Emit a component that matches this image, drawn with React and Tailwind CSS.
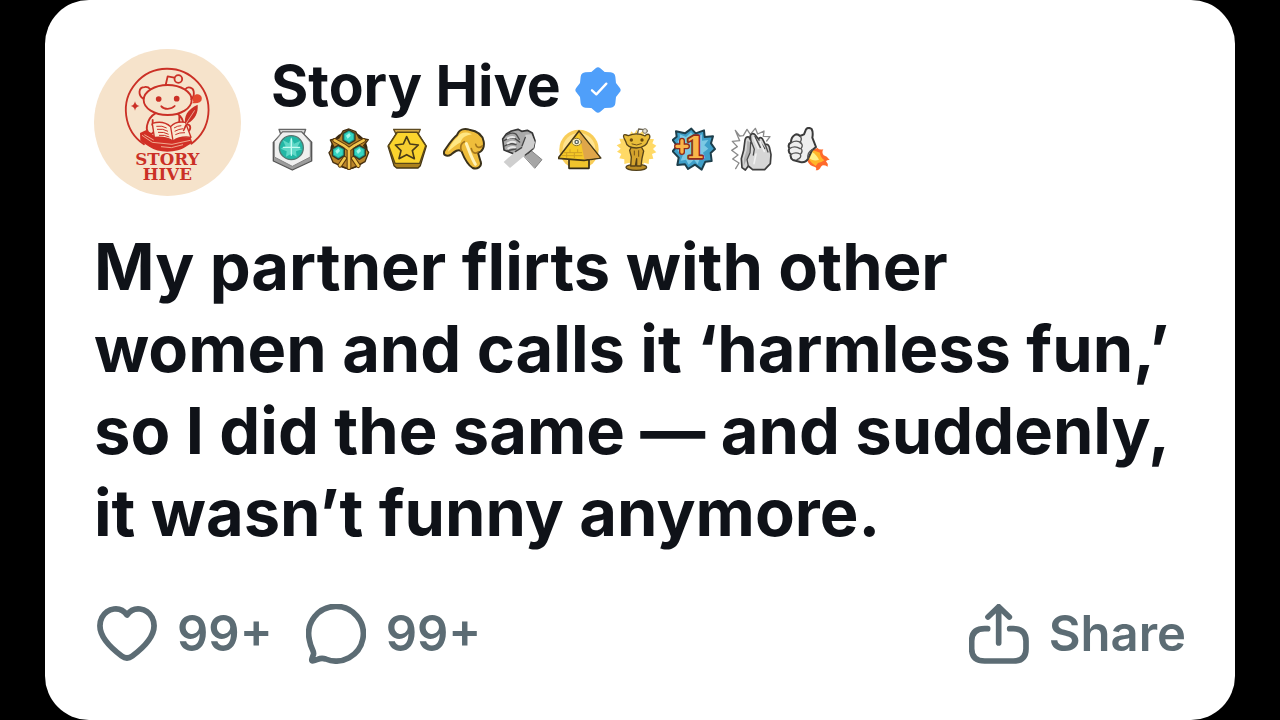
import React from "react";

function Avatar() {
  return (
    <svg
      viewBox="30 27 441 441"
      className="size-[147px] shrink-0"
      role="img"
      aria-label="Story Hive logo"
    >
      <circle cx="250.500" cy="247.500" r="220.500" fill="#f6e3cb" />
      <g
        fill="none"
        stroke="#cb3026"
        strokeWidth="5.500"
        strokeLinecap="round"
        strokeLinejoin="round"
      >
        <path d="M180 313A124 124 0 1 1 322 311" />
        <path d="M245 135L251 109L271 113" />
        <circle cx="283" cy="117" r="11.500" />
        <path d="M178 176C162 166 162 142 182 141C190 140 195 143 198 147" />
        <path d="M305 147C312 138 327 143 329 154C331 165 328 172 322 178" />
        <ellipse cx="251" cy="180" rx="72" ry="45" />
        <path d="M214 220C200 228 192 242 189 257C186 275 194 283 205 280C213 276 211 263 205 254" />
        <path d="M206 254V240" />
        <path d="M282 223C292 230 296 238 298 250M286 226V248" />
        <path d="M309 253C321 253 322 269 312 274" />
        <path d="M232 199C240 209 262 209 272 198" />
      </g>
      <circle cx="224" cy="177" r="8.500" fill="#cb3026" />
      <circle cx="278" cy="176" r="8.500" fill="#cb3026" />
      <path d="M153 184Q155 196 167 198Q155 200 153 212Q151 200 140 198Q151 196 153 184Z" fill="#cb3026" />
      <path d="M324 190L328 185C322 171 331 163 341 163C352 164 356 174 352 182C347 189 336 190 324 190Z" fill="#e4482f" />
      {/* Book */}
      <path d="M168 279L187 270L208 286L320 293L325 308L309 318C280 340 224 340 197 321L169 303Z" fill="#d22f25" />
      <path d="M205 250C228 243 248 249 260 260C271 247 287 244 304 247L321 292C300 289 282 292 267 303C251 292 231 290 211 292Z" fill="#f9e8d2" stroke="#cb3026" strokeWidth="4" strokeLinejoin="round" />
      <path d="M260 261L267 302" stroke="#cb3026" strokeWidth="4" />
      <path d="M217 259Q235 256 248 264M219 268Q237 265 252 274M222 277Q240 275 254 283M225 286Q242 284 256 291M270 264Q281 257 292 257M272 274Q284 267 298 266M274 284Q286 277 303 278" fill="none" stroke="#cb3026" strokeWidth="3" />
      <path d="M174 286L205 307L264 313L319 301M181 284L209 300M231 320L262 323L297 314" fill="none" stroke="#f6c3a6" strokeWidth="2.500" />
      {/* Quill */}
      <path d="M304 253C299 229 310 208 341 194C343 218 334 237 312 250L300 274L296 273Z" fill="#cb3026" />
      <path d="M304 254L332 211" stroke="#f6e3cb" strokeWidth="2" />
      <text
        fill="#cb3026"
        textAnchor="middle"
        fontFamily="'DejaVu Serif', serif"
        fontWeight="700"
        fontSize="50"
      >
        <tspan x="250" y="376">STORY</tspan>
        <tspan x="250" y="421">HIVE</tspan>
      </text>
    </svg>
  );
}

function VerifiedBadge() {
  return (
    <svg
      viewBox="936 50 138 138"
      className="mt-2 size-[46px] shrink-0"
      role="img"
      aria-label="Verified"
    >
      <path
        d="M998 54Q1005 48 1012 54L1025 65L1043 66Q1055 67 1057 79L1059 98L1070 112Q1076 119 1070 126L1059 140L1057 159Q1056 171 1043 172L1025 173L1012 184Q1005 190 998 184L985 173L967 172Q955 171 953 159L951 140L940 126Q934 119 940 112L951 98L953 79Q955 67 967 66L985 65Z"
        fill="#4f9ffa"
      />
      <path d="M987 120L1000 132L1030 100" fill="none" stroke="#fff" strokeWidth="7" strokeLinecap="round" strokeLinejoin="round" />
    </svg>
  );
}

function Award({ label, viewBox, children }) {
  return (
    <svg
      viewBox={viewBox}
      className="size-11 shrink-0"
      role="img"
      aria-label={label}
      strokeLinejoin="round"
      strokeLinecap="round"
    >
      {children}
    </svg>
  );
}

function Gem({ x, y }) {
  return (
    <g transform={`translate(${x} ${y})`}>
      <path d="M0 -21L18 -11V10L0 21L-18 10V-11Z" fill="#17a597" stroke="#3c3820" strokeWidth="4" />
      <path d="M0 -16L13 -8V7L0 15L-13 7V-8Z" fill="#37d5c2" />
      <path d="M-9 -4L1 -12L5 -4L-4 5Z" fill="#a5f7ea" />
    </g>
  );
}

function Awards() {
  return (
    <div className="mt-[7px] flex w-[560px] max-w-full justify-between">
      <Award label="Platinum award" viewBox="15 21 132 132">
        <path d="M39 28H119L115 40H43Z" fill="#d6d6d6" stroke="#666" strokeWidth="4" />
        <path d="M50 36H107L137 67V123L79 150L22 123V67Z" fill="#9c9c9c" stroke="#555" strokeWidth="4" />
        <path d="M51 36H106L133 66V111L79 139L25 111V66Z" fill="#efefef" stroke="#858585" strokeWidth="3" />
        <circle cx="76" cy="83" r="36" fill="#22b7a5" stroke="#53756f" strokeWidth="4" />
        <path d="M76 51L84 71L104 62L94 82L108 88L90 94L92 110L76 101L60 110L62 94L44 86L59 79L50 60L69 70Z" fill="#5fd8c7" />
        <path d="M76 57V106M52 82H101" stroke="#c5fbf2" strokeWidth="4" />
      </Award>
      <Award label="Ternion award" viewBox="187 21 132 132">
        <circle cx="250" cy="91" r="52" fill="#b67d20" stroke="#37260d" strokeWidth="8" />
        <path d="M194 60L220 54L232 33L250 27L270 35L280 54L308 59L294 77L309 97L298 125L272 139L250 148L229 139L202 127L190 98L204 80Z" fill="#b98429" stroke="#442e10" strokeWidth="4" />
        <path d="M207 61L235 77L250 88L267 76L294 61M250 88V143M237 115L223 136M263 115L278 137" fill="none" stroke="#5c3a0e" strokeWidth="14" />
        <path d="M207 61L235 77L250 88L267 76L294 61M250 88V143M237 115L223 136M263 115L278 137" fill="none" stroke="#f2c54c" strokeWidth="8" />
        <Gem x={250} y={51} />
        <Gem x={218} y={97} />
        <Gem x={281} y={97} />
      </Award>
      <Award label="Gold star award" viewBox="359 21 132 132">
        <path d="M382 28H462L457 40H388Z" fill="#d8ad47" stroke="#5e4a20" strokeWidth="4" />
        <path d="M392 37H453L480 78L462 137L455 144H391L383 137L365 78Z" fill="#ac811c" stroke="#463715" strokeWidth="4" />
        <path d="M393 37H452L478 77L460 130H386L367 77Z" fill="#fbd42d" stroke="#5b4817" strokeWidth="4" />
        <path d="M421 50L431 72L456 75L438 92L444 116L421 104L398 116L404 92L387 75L411 72Z" fill="#f6cd30" stroke="#493b18" strokeWidth="5" />
      </Award>
      <Award label="Pointing down award" viewBox="9 21 132 132">
        <path d="M51 45C57 29 72 24 88 29C113 33 128 47 131 64C134 80 128 95 114 98L122 125C127 140 111 149 98 144C86 137 72 113 64 93C53 88 46 93 34 103C19 113 7 104 14 91C23 78 36 57 51 45Z" fill="#efbd3b" stroke="#3b321b" strokeWidth="6" />
        <path d="M53 51C62 35 81 34 96 43C78 47 66 52 62 67C50 72 38 84 24 95C27 81 41 61 53 51Z" fill="#ffe783" />
        <path d="M79 71C86 87 93 112 106 133" fill="none" stroke="#fff2b8" strokeWidth="9" />
        <path d="M64 92C60 80 63 70 73 65M113 97C103 103 96 96 94 86M127 78C117 86 109 82 107 73" fill="none" stroke="#a5771d" strokeWidth="5" />
      </Award>
      <Award label="Handshake award" viewBox="181 21 132 132">
        <path d="M246 100L265 84L307 119L286 144Z" fill="#a6a6a6" stroke="#858585" strokeWidth="3" />
        <path d="M189 57L200 42L215 33L235 28L246 34L263 31L278 39L286 62L282 84L265 99L239 110L216 99L193 90Z" fill="#aaa" stroke="#363636" strokeWidth="5" />
        <path d="M192 126L228 94L246 82L251 61L258 44L275 43L286 67L281 87L260 103L211 144Z" fill="#cfcfcf" />
        <path d="M247 78L257 52M227 95L246 83M280 87L257 105" fill="none" stroke="#444" strokeWidth="4" />
        <path d="M201 45Q218 35 230 43L239 58M193 62Q212 49 226 56L240 66M195 78Q212 67 229 74M203 92L229 87" fill="none" stroke="#4d4d4d" strokeWidth="4" />
        <path d="M204 55Q216 49 224 52M204 70Q217 62 227 67M206 85Q217 79 226 82" fill="none" stroke="#e8e8e8" strokeWidth="6" />
      </Award>
      <Award label="All-seeing award" viewBox="353 21 132 132">
        <circle cx="416" cy="88" r="59" fill="#f8cd58" />
        <circle cx="416" cy="88" r="49" fill="#ffe38f" />
        <path d="M386 116H446V145H386Z" fill="#f0c42c" stroke="#332b17" strokeWidth="5" />
        <path d="M416 33L481 114L431 121L353 115Z" fill="#f6c927" stroke="#463817" strokeWidth="5" />
        <path d="M416 36L478 113L432 118Z" fill="#dfa64a" />
        <path d="M371 98H424M364 107H425M389 89V98M412 89V97M379 100V112M402 100V113" stroke="#cfa024" strokeWidth="3" />
        <ellipse cx="409" cy="66" rx="14" ry="11" fill="#fff4c5" stroke="#8a7636" strokeWidth="3" />
        <circle cx="409" cy="66" r="7" fill="#5c655f" />
        <circle cx="409" cy="66" r="3" fill="#fff" />
      </Award>
      <Award label="Golden mascot award" viewBox="15 21 132 132">
        <path d="M80 29L88 41L99 32L103 46L117 42L118 56L132 58L127 70L139 77L129 87L139 97L126 102L130 116L117 118L116 132L102 128L95 140L80 134L66 141L58 128L43 132L43 118L28 115L34 102L21 95L32 86L20 76L33 70L28 56L43 56L44 42L58 47L64 34L72 42Z" fill="#ffd966" />
        <ellipse cx="79" cy="142" rx="31" ry="9" fill="#bd8e25" stroke="#51401b" strokeWidth="4" />
        <path d="M59 91L64 81H94L101 93L96 115L93 138H80V116L76 138H62L64 111Z" fill="#d5a32d" stroke="#574218" strokeWidth="4" />
        <path d="M49 45Q37 41 42 54L47 64Q50 83 79 84Q110 82 114 62Q124 50 116 43Q109 42 105 48Q81 36 55 47Z" fill="#e9bd39" stroke="#59451a" strokeWidth="4" />
        <path d="M82 42L86 27L101 29" fill="none" stroke="#6b6350" strokeWidth="4" />
        <circle cx="105" cy="33" r="7" fill="#e4e0d5" stroke="#77715f" strokeWidth="3" />
        <circle cx="64" cy="60" r="5" fill="#69470d" />
        <circle cx="96" cy="60" r="5" fill="#69470d" />
        <path d="M66 72Q80 79 94 71M73 93V105M86 92V109" fill="none" stroke="#71501a" strokeWidth="3" />
      </Award>
      <Award label="Plus one award" viewBox="187 21 132 132">
        <path d="M245 26L258 40L283 31L285 51L310 49L304 70L316 87L303 99L306 123L287 125L276 149L256 134L235 147L226 133L203 135L207 113L189 94L202 78L189 60L201 50L199 34L226 40Z" fill="#3f9fc9" stroke="#1d3e4b" strokeWidth="6" />
        <path d="M244 37L257 53L277 43L277 62L296 60L284 76L296 86L280 98L287 115L272 112L264 133L253 119L237 134L229 119L213 122L220 104L203 92L214 81L203 64L212 57L210 43L229 51Z" fill="#7cc9e4" />
        <g
          fontFamily="'DejaVu Serif', serif"
          fontWeight="700"
          fontSize="88"
          fill="#f9b64a"
          stroke="#8f2a1a"
          strokeWidth="10"
          paintOrder="stroke"
        >
          <text x="226" y="114">1</text>
          <path d="M217 62V96M202 79H232" strokeWidth="18" />
          <path d="M217 62V96M202 79H232" stroke="#f9b64a" strokeWidth="10" />
        </g>
      </Award>
      <Award label="Applause award" viewBox="359 21 132 132">
        <path d="M375 31L388 48L399 47L410 28L420 43L435 25L442 42L461 33L459 49L479 50L469 63M376 146L386 129L367 117L383 105L364 91L381 80L366 64L388 62L375 31" fill="none" stroke="#8a8a8a" strokeWidth="4" />
        <path d="M395 143L393 116L400 91L404 60Q407 48 416 51L421 60L420 47Q425 37 434 44L445 58Q448 49 456 56L465 74Q472 70 477 81L482 104L480 131L463 149H427L414 138L405 150Z" fill="#d6d6d6" stroke="#3d3d3d" strokeWidth="5" />
        <path d="M400 139L401 116L409 91L411 62L418 66L416 101L408 120Z" fill="#b0b0b0" />
        <path d="M421 60L432 88M434 50L450 82M446 60L463 86M465 75L473 96M421 66L419 98L410 119L414 138M432 88L429 105" fill="none" stroke="#4b4b4b" strokeWidth="4" />
        <path d="M430 53L444 85M449 64L462 94M437 102L431 131" fill="none" stroke="#f0f0f0" strokeWidth="5" />
      </Award>
      <Award label="Rocket like award" viewBox="531 21 132 132">
        <path d="M606 82Q617 90 622 83Q627 91 640 88Q634 97 641 106Q651 108 659 120Q651 119 648 124Q656 132 653 140Q639 132 633 140Q629 151 617 151Q622 143 613 140Q599 139 591 120Z" fill="#ff6a2b" />
        <path d="M605 90Q619 94 630 98Q629 109 643 121Q635 127 624 129L617 138Q605 131 596 118Z" fill="#ffb629" />
        <path d="M606 96Q618 102 627 119Q613 125 599 116Z" fill="#fff08a" />
        <path d="M570 48L582 43L588 28Q595 20 605 27Q610 37 607 53L618 81L606 91L594 116Q587 129 571 126L549 120Q540 114 542 103Q533 96 538 85Q532 73 543 67Q543 52 554 45Q562 40 570 48Z" fill="#eee" stroke="#3b3b3b" strokeWidth="6" />
        <path d="M544 68Q560 58 574 69M539 85Q556 76 570 86M543 103Q557 95 570 102M570 49Q578 56 570 68Q582 74 573 86Q580 94 571 103Q576 113 561 119M594 116Q591 97 607 89" fill="none" stroke="#555" strokeWidth="4" />
      </Award>
    </div>
  );
}

function ActionIcon({ viewBox, children }) {
  return (
    <svg
      viewBox={viewBox}
      className="size-[60px] shrink-0"
      fill="none"
      stroke="currentColor"
      strokeWidth="17"
      strokeLinecap="round"
      strokeLinejoin="round"
      aria-hidden="true"
    >
      {children}
    </svg>
  );
}

function ActionButton({ label, icon, children }) {
  return (
    <button
      type="button"
      aria-label={label}
      className="flex cursor-pointer items-center gap-5 text-[49px] leading-[60px] font-semibold"
    >
      {icon}
      <span>{children}</span>
    </button>
  );
}

export default function App() {
  return (
    <main className="min-h-screen bg-black px-[45px] font-['Inter',sans-serif]">
      <article className="flex min-h-screen flex-col rounded-[44px] bg-white px-[49px] pt-[49px] pb-14 text-[#0f1218]">
        <header className="flex gap-[30px]">
          <Avatar />
          <div className="min-w-0">
            <div className="flex items-center gap-3.5 pt-[3px]">
              <h2 className="text-[57px] leading-[68px] font-bold">
                Story Hive
              </h2>
              <VerifiedBadge />
            </div>
            <Awards />
          </div>
        </header>

        <h1 className="mt-[30px] text-[65px] leading-[82px] font-bold">
          My partner flirts with other women and calls it ‘harmless fun,’ so I
          did the same — and suddenly, it wasn’t funny anymore.
        </h1>

        <footer className="mt-auto flex items-center justify-between pl-[3px] text-[#5c6c74]">
          <div className="flex items-center gap-[33px]">
            <ActionButton
              label="Like, 99+"
              icon={
                <ActionIcon viewBox="39 42 180 180">
                  <path d="M129 75C108 46 70 54 54 82C34 122 66 163 113 198Q129 210 145 198C192 163 224 122 204 82C188 54 150 46 129 75Z" />
                </ActionIcon>
              }
            >
              99+
            </ActionButton>
            <ActionButton
              label="Comments, 99+"
              icon={
                <ActionIcon viewBox="664 42 180 180">
                  <path d="M674 149A82 82 0 1 1 723 207Q711 203 699 208L688 212Q679 215 682 206L685 197Q689 190 684 180Q677 166 674 149Z" />
                </ActionIcon>
              }
            >
              99+
            </ActionButton>
          </div>
          <ActionButton
            label="Share"
            icon={
              <ActionIcon viewBox="54 42 180 180">
                <path d="M143 159V51M111 81L143 50L175 81M110 116H101Q62 116 62 153V176Q62 213 101 213H187Q225 213 225 176V153Q225 116 187 116H176" />
              </ActionIcon>
            }
          >
            Share
          </ActionButton>
        </footer>
      </article>
    </main>
  );
}
